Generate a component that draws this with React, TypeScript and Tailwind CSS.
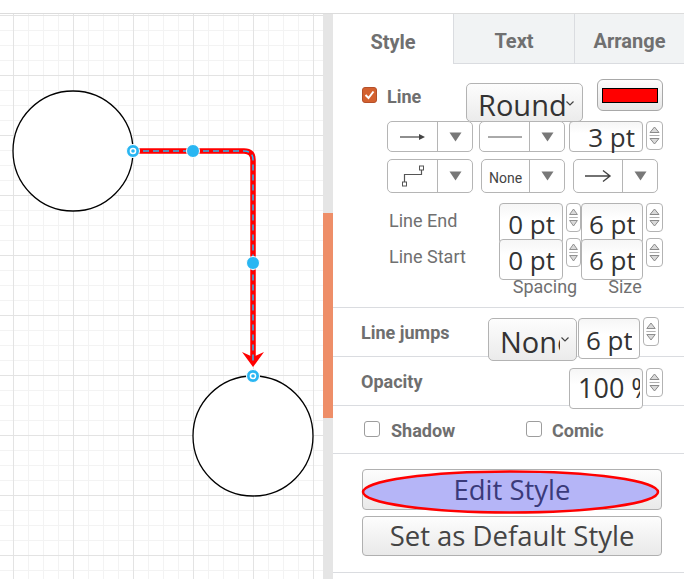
import React from "react";

const ui = "font-[Roboto,'Liberation_Sans',sans-serif]";
const big = "font-['Open_Sans','DejaVu_Sans',sans-serif]";

function Triangle() {
  return (
    <svg width="13" height="10" viewBox="0 0 13 10">
      <path d="M0.5 0.5 H12.5 L6.5 9.5 Z" fill="#787878" />
    </svg>
  );
}

function Spinner({ className }: { className: string }) {
  return (
    <div className={`border border-[#b3b3b3] rounded-[4px] bg-white overflow-hidden ${className}`}>
      <svg width="100%" height="100%" viewBox="0 0 15 27" preserveAspectRatio="none">
        <path d="M3 10.5 L7.5 5 L12 10.5 Z" fill="#d9d9d9" stroke="#8a8a8a" strokeWidth="1" />
        <path d="M2.5 13.5 H12.5" stroke="#b0b0b0" strokeWidth="1" />
        <path d="M3 16.5 L7.5 22 L12 16.5 Z" fill="#d9d9d9" stroke="#8a8a8a" strokeWidth="1" />
      </svg>
    </div>
  );
}

function Combo({ className, children }: { className: string; children: React.ReactNode }) {
  return (
    <div className={`flex bg-white border border-[#b5b5b5] rounded-[5px] ${className}`}>
      <div className="flex-1 flex items-center justify-center">{children}</div>
      <div className="w-[35px] border-l border-[#b5b5b5] flex items-center justify-center">
        <Triangle />
      </div>
    </div>
  );
}

function NumInput({ value, className, inner = "text-right" }: { value: string; className: string; inner?: string }) {
  return (
    <div
      className={`relative bg-[linear-gradient(#f6f6f6,#ffffff_40%)] border border-[#b3b3b3] rounded-[4px] px-[7px] text-[26px] text-[#333] ${big} ${className}`}
    >
      <div className={`overflow-hidden whitespace-nowrap ${inner}`}>{value}</div>
    </div>
  );
}

function Select({ value, className, chevronGap }: { value: string; className: string; chevronGap: string }) {
  return (
    <div
      className={`flex items-center bg-[linear-gradient(#fdfdfd,#ebebeb)] border border-[#b3b3b3] rounded-[5px] overflow-hidden pl-[11px] ${className}`}
    >
      <div className={`flex-1 overflow-hidden whitespace-nowrap text-[29px] text-[#333] leading-[36px] pt-[4px] ${big}`}>
        {value}
      </div>
      <svg width="8" height="5" viewBox="0 0 8 5" className={chevronGap}>
        <path d="M0.5 0.5 L4 4 L7.5 0.5" fill="none" stroke="#444" strokeWidth="1.2" />
      </svg>
    </div>
  );
}

function CheckBox({ checked }: { checked?: boolean }) {
  if (checked) {
    return (
      <div className="w-[15px] h-[16px] rounded-[3px] bg-[#d4612f] border border-[#b4502a] flex items-center justify-center">
        <svg width="11" height="10" viewBox="0 0 11 10">
          <path d="M1.5 5 L4.5 8 L9.5 1.5" fill="none" stroke="#fff" strokeWidth="2" />
        </svg>
      </div>
    );
  }
  return <div className="w-[16px] h-[16px] rounded-[3px] bg-white border border-[#9d9d9d]" />;
}

function Canvas() {
  return (
    <svg width="323" height="565" viewBox="0 14 323 565" className="block shrink-0">
      <defs>
        <pattern id="grid" x="13" y="15" width="60" height="60" patternUnits="userSpaceOnUse">
          <rect width="60" height="60" fill="#fff" />
          <path
            d="M15.5 0 V60 M30.5 0 V60 M45.5 0 V60 M0 15.5 H60 M0 30.5 H60 M0 45.5 H60"
            stroke="#f3f3f3"
            strokeWidth="1"
          />
          <path d="M0.5 0 V60 M0 0.5 H60" stroke="#e3e3e3" strokeWidth="1" />
        </pattern>
      </defs>
      <rect x="0" y="14" width="323" height="565" fill="url(#grid)" />

      <circle cx="73" cy="151" r="60" fill="#fff" stroke="#000" strokeWidth="1.3" />
      <circle cx="253" cy="436" r="60" fill="#fff" stroke="#000" strokeWidth="1.3" />

      <path d="M133 151 H244 Q253 151 253 160 V360" fill="none" stroke="#ff0000" strokeWidth="5.5" />
      <path d="M253 367 L242 352 L253 357 L264 352 Z" fill="#ff0000" />
      <path
        d="M133 151 H244 Q253 151 253 160 V362"
        fill="none"
        stroke="#29b6f2"
        strokeWidth="1.5"
        strokeDasharray="6 4"
      />

      <circle cx="193" cy="151" r="6.5" fill="#29b6f2" stroke="#fff" strokeWidth="1" />
      <circle cx="253" cy="263" r="6.5" fill="#29b6f2" stroke="#fff" strokeWidth="1" />

      <circle cx="133" cy="151" r="6.5" fill="#29b6f2" stroke="#fff" strokeWidth="1" />
      <circle cx="133" cy="151" r="3.3" fill="#fff" />
      <circle cx="133" cy="151" r="1.8" fill="#29b6f2" />

      <circle cx="253" cy="376" r="6.5" fill="#29b6f2" stroke="#fff" strokeWidth="1" />
      <circle cx="253" cy="376" r="3.3" fill="#fff" />
      <circle cx="253" cy="376" r="1.8" fill="#29b6f2" />
    </svg>
  );
}

function Panel() {
  const label = `text-[18px] leading-[20px] text-[#707070] ${ui}`;
  const bold = `text-[18px] leading-[20px] font-bold text-[#6f6f6f] ${ui}`;
  return (
    <div className="flex-1 flex flex-col bg-white">
      <div className={`flex h-[50px] text-[20px] font-bold text-[#707070] ${ui}`}>
        <div className="w-[120px] flex items-center justify-center pt-[5px]">Style</div>
        <div className="w-[121px] flex items-center justify-center pt-[5px] bg-[#f1f3f4] border-l border-b border-[#dadce0]">
          Text
        </div>
        <div className="flex-1 flex items-center justify-center pt-[5px] bg-[#f1f3f4] border-l border-b border-[#dadce0]">
          Arrange
        </div>
      </div>

      <div className="pt-[15px] pb-[10px] border-b border-[#dadce0]">
        <div className="flex items-start h-[42px]">
          <div className="w-[133px] pl-[29px] pt-[8px] flex items-start gap-[10px]">
            <CheckBox checked />
            <span className={bold}>Line</span>
          </div>
          <Select value="Round" className="mt-[4px] w-[117px] h-[39px]" chevronGap="ml-[1px] mr-[8px] mt-[2px]" />
          <div className="ml-[14px] w-[66px] h-[32px] rounded-[6px] border border-[#a8a8a8] bg-[linear-gradient(#fdfdfd,#e6e6e6)] flex items-center justify-center">
            <div className="w-[56px] h-[15px] bg-[#ff0000] border border-black" />
          </div>
        </div>

        <div className="relative flex items-start h-[31px]">
          <Combo className="ml-[54px] w-[86px] h-[31px]">
            <svg width="26" height="10" viewBox="0 0 26 10">
              <path d="M0 5 H20" stroke="#444" strokeWidth="1.2" />
              <path d="M19 2 L25 5 L19 8 Z" fill="#444" />
            </svg>
          </Combo>
          <Combo className="ml-[6px] w-[86px] h-[31px]">
            <svg width="34" height="4" viewBox="0 0 34 4">
              <path d="M0 2 H34" stroke="#555" strokeWidth="1" />
            </svg>
          </Combo>
          <NumInput value="3 pt" className="ml-[4px] w-[74px] h-[31px] leading-[31px]" />
          <Spinner className="ml-[3px] w-[17px] h-[29px]" />
        </div>

        <div className="relative flex items-start h-[34px] mt-[7px]">
          <Combo className="ml-[54px] w-[86px] h-[34px]">
            <svg width="24" height="22" viewBox="0 0 24 22">
              <path d="M3.5 18 V9.5 H20.5 V4" fill="none" stroke="#555" strokeWidth="1.2" />
              <rect x="1.5" y="17" width="4" height="4" fill="#fff" stroke="#555" strokeWidth="1" />
              <rect x="18.5" y="1" width="4" height="4" fill="#fff" stroke="#555" strokeWidth="1" />
            </svg>
          </Combo>
          <Combo className="ml-[8px] w-[84px] h-[34px]">
            <span className={`text-[14px] text-[#444] pt-[4px] ${ui}`}>None</span>
          </Combo>
          <Combo className="ml-[8px] w-[85px] h-[34px]">
            <svg width="28" height="14" viewBox="0 0 28 14">
              <path d="M1 7 H26 M19 1.5 L26 7 L19 12.5" fill="none" stroke="#444" strokeWidth="1.4" />
            </svg>
          </Combo>
        </div>

        <div className="relative flex items-start h-[36px] mt-[10px]">
          <div className={`w-[166px] pl-[56px] mt-[8px] ${label}`}>Line End</div>
          <NumInput value="0 pt" className="w-[64px] h-[41px] leading-[41px]" />
          <Spinner className="ml-[3px] w-[15px] h-[29px]" />
          <NumInput value="6 pt" className="w-[62px] h-[41px] leading-[41px]" />
          <Spinner className="ml-[3px] w-[17px] h-[29px]" />
        </div>
        <div className="relative flex items-start h-[36px]">
          <div className={`w-[166px] pl-[56px] mt-[8px] ${label}`}>Line Start</div>
          <NumInput value="0 pt" className="w-[64px] h-[41px] leading-[41px]" />
          <Spinner className="ml-[3px] -mt-[1px] w-[15px] h-[29px]" />
          <NumInput value="6 pt" className="w-[62px] h-[41px] leading-[41px]" />
          <Spinner className="ml-[3px] -mt-[1px] w-[17px] h-[29px]" />
        </div>
        <div className={`flex mt-[2px] h-[20px] ${label}`}>
          <div className="ml-[166px] w-[92px] text-center">Spacing</div>
          <div className="w-[68px] text-center">Size</div>
        </div>
      </div>

      <div className="flex items-start h-[49px] border-b border-[#dadce0]">
        <div className={`w-[155px] pl-[28px] mt-[15px] ${bold}`}>Line jumps</div>
        <Select value="None" className="relative mt-[10px] w-[89px] h-[43px]" chevronGap="ml-[1px] mr-[7px]" />
        <NumInput value="6 pt" className="ml-[1px] mt-[10px] w-[62px] h-[41px] leading-[43px]" />
        <Spinner className="ml-[3px] mt-[9px] w-[16px] h-[29px]" />
      </div>

      <div className="flex items-start h-[49px] border-b border-[#dadce0]">
        <div className={`w-[236px] pl-[28px] mt-[15px] ${bold}`}>Opacity</div>
        <NumInput
          value="100 %"
          className="mt-[11px] w-[74px] h-[41px] leading-[38px] pl-[8px] pr-[2px]"
          inner="text-left text-[27px]"
        />
        <Spinner className="ml-[3px] mt-[11px] w-[17px] h-[29px]" />
      </div>

      <div className="flex items-start h-[48px] pt-[15px] border-b border-[#dadce0]">
        <div className="w-[193px] pl-[31px] flex items-start gap-[11px]">
          <CheckBox />
          <span className={bold}>Shadow</span>
        </div>
        <div className="flex items-start gap-[10px]">
          <CheckBox />
          <span className={bold}>Comic</span>
        </div>
      </div>

      <div className={`h-[119px] pt-[15px] pl-[29px] border-b border-[#dadce0] text-[27.5px] ${big}`}>
        <div className="relative w-[300px] h-[41px] rounded-[4px] border border-[#b0b0b0] bg-[linear-gradient(#fdfdfd,#e9e9e9)] flex items-center justify-center">
          <svg width="302" height="46" viewBox="0 0 302 46" className="absolute left-[-2px] top-0 overflow-visible">
            <ellipse cx="149.5" cy="22" rx="147.5" ry="20.5" fill="#b5b5f7" stroke="#ff0000" strokeWidth="2.5" />
          </svg>
          <span className="relative text-[#3a3a7a] leading-[36px]">Edit Style</span>
        </div>
        <div className="mt-[6px] w-[300px] h-[40px] rounded-[4px] border border-[#b0b0b0] bg-[linear-gradient(#fdfdfd,#e9e9e9)] flex items-center justify-center">
          <span className="text-[#444] leading-[36px]">Set as Default Style</span>
        </div>
      </div>
    </div>
  );
}

export default function App() {
  return (
    <div className="w-[684px] h-[579px] bg-white flex flex-col overflow-hidden">
      <div className="h-[14px] shrink-0 border-b border-[#dcdcdc]" />
      <div className="flex flex-1 min-h-0">
        <Canvas />
        <div className="w-[10px] shrink-0 bg-[#e5e5e5]">
          <div className="mt-[199px] h-[205px] bg-[#ee8e68]" />
        </div>
        <Panel />
      </div>
    </div>
  );
}
